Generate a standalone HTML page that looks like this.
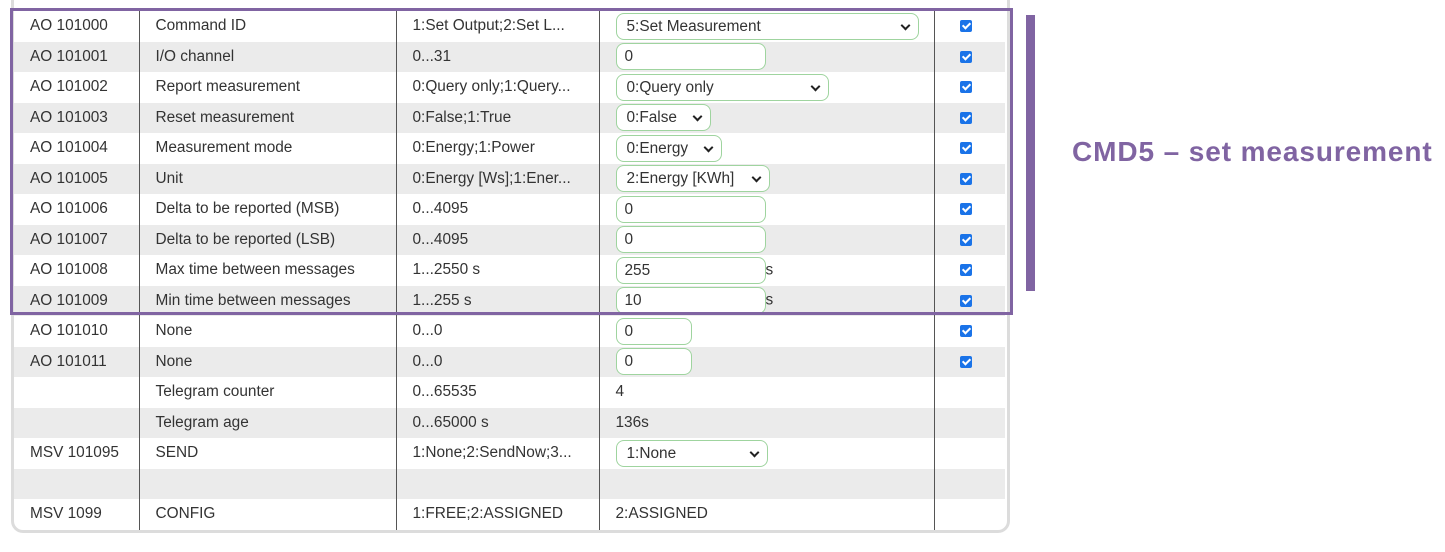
<!DOCTYPE html><html><head><style>
body{margin:0;width:1445px;height:552px;background:#fff;position:relative;overflow:hidden;font-family:"Liberation Sans",Arial,sans-serif;font-size:15.4px;color:#333}
.wrap{position:absolute;left:11px;top:0;width:993px;height:530px;border:3px solid #dcdcdc;border-top:none;border-radius:0 0 12px 12px;background:#fff}
table{border-collapse:collapse;position:absolute;left:14px;top:11px;width:991px}
td{height:30.5px;padding:0;vertical-align:middle;box-sizing:border-box}
tr:nth-child(even) td{background:#ebebeb}
td.c1{width:125px;padding-left:16px}
td.c2{width:257px;padding-left:16px;border-left:1px solid #555}
td.c3{width:203px;padding-left:16px;border-left:1px solid #555}
td.c4{width:335px;padding-left:16px;border-left:1px solid #555;white-space:nowrap}
td.c5{border-left:1px solid #555;text-align:center;padding-right:8px}
.f{display:inline-block;box-sizing:border-box;height:27px;border:1px solid #9fd49f;border-radius:8px;background:#fff;padding:4px 10px 0;vertical-align:middle;position:relative}
.i{padding-left:8px}
.s:after{content:"";position:absolute;right:9px;top:8px;width:5px;height:5px;border-right:2px solid #222;border-bottom:2px solid #222;transform:rotate(45deg)}
.cb{display:inline-block;width:12px;height:12px;background:#1a73e8;border-radius:2px;position:relative;vertical-align:middle}
.cb:after{content:"";position:absolute;left:4px;top:1px;width:3px;height:6px;border-right:2px solid #fff;border-bottom:2px solid #fff;transform:rotate(45deg)}
.box{position:absolute;left:10px;top:8px;width:997px;height:301px;border:3px solid #8064a2}
.bar{position:absolute;left:1026px;top:15px;width:9px;height:276px;background:#8064a2}
.t{position:absolute;left:1072px;top:136px;font-weight:bold;font-size:28px;color:#8064a2;font-family:"Liberation Sans",Calibri,sans-serif;letter-spacing:0.9px;white-space:nowrap}
</style></head><body>
<div class="wrap"></div>
<table>
<tr><td class="c1">AO 101000</td><td class="c2">Command ID</td><td class="c3">1:Set Output;2:Set L...</td><td class="c4"><span class="f s" style="width:303px">5:Set Measurement</span></td><td class="c5"><span class="cb"></span></td></tr>
<tr><td class="c1">AO 101001</td><td class="c2">I/O channel</td><td class="c3">0...31</td><td class="c4"><span class="f i" style="width:150px">0</span></td><td class="c5"><span class="cb"></span></td></tr>
<tr><td class="c1">AO 101002</td><td class="c2">Report measurement</td><td class="c3">0:Query only;1:Query...</td><td class="c4"><span class="f s" style="width:213px">0:Query only</span></td><td class="c5"><span class="cb"></span></td></tr>
<tr><td class="c1">AO 101003</td><td class="c2">Reset measurement</td><td class="c3">0:False;1:True</td><td class="c4"><span class="f s" style="width:95px">0:False</span></td><td class="c5"><span class="cb"></span></td></tr>
<tr><td class="c1">AO 101004</td><td class="c2">Measurement mode</td><td class="c3">0:Energy;1:Power</td><td class="c4"><span class="f s" style="width:106px">0:Energy</span></td><td class="c5"><span class="cb"></span></td></tr>
<tr><td class="c1">AO 101005</td><td class="c2">Unit</td><td class="c3">0:Energy [Ws];1:Ener...</td><td class="c4"><span class="f s" style="width:154px">2:Energy [KWh]</span></td><td class="c5"><span class="cb"></span></td></tr>
<tr><td class="c1">AO 101006</td><td class="c2">Delta to be reported (MSB)</td><td class="c3">0...4095</td><td class="c4"><span class="f i" style="width:150px">0</span></td><td class="c5"><span class="cb"></span></td></tr>
<tr><td class="c1">AO 101007</td><td class="c2">Delta to be reported (LSB)</td><td class="c3">0...4095</td><td class="c4"><span class="f i" style="width:150px">0</span></td><td class="c5"><span class="cb"></span></td></tr>
<tr><td class="c1">AO 101008</td><td class="c2">Max time between messages</td><td class="c3">1...2550 s</td><td class="c4"><span class="f i" style="width:150px">255</span>s</td><td class="c5"><span class="cb"></span></td></tr>
<tr><td class="c1">AO 101009</td><td class="c2">Min time between messages</td><td class="c3">1...255 s</td><td class="c4"><span class="f i" style="width:150px">10</span>s</td><td class="c5"><span class="cb"></span></td></tr>
<tr><td class="c1">AO 101010</td><td class="c2">None</td><td class="c3">0...0</td><td class="c4"><span class="f i" style="width:76px">0</span></td><td class="c5"><span class="cb"></span></td></tr>
<tr><td class="c1">AO 101011</td><td class="c2">None</td><td class="c3">0...0</td><td class="c4"><span class="f i" style="width:76px">0</span></td><td class="c5"><span class="cb"></span></td></tr>
<tr><td class="c1"></td><td class="c2">Telegram counter</td><td class="c3">0...65535</td><td class="c4">4</td><td class="c5"></td></tr>
<tr><td class="c1"></td><td class="c2">Telegram age</td><td class="c3">0...65000 s</td><td class="c4">136s</td><td class="c5"></td></tr>
<tr><td class="c1">MSV 101095</td><td class="c2">SEND</td><td class="c3">1:None;2:SendNow;3...</td><td class="c4"><span class="f s" style="width:152px">1:None</span></td><td class="c5"></td></tr>
<tr><td class="c1"></td><td class="c2"></td><td class="c3"></td><td class="c4"></td><td class="c5"></td></tr>
<tr><td class="c1">MSV 1099</td><td class="c2">CONFIG</td><td class="c3">1:FREE;2:ASSIGNED</td><td class="c4">2:ASSIGNED</td><td class="c5"></td></tr>
</table>
<div class="box"></div>
<div class="bar"></div>
<div class="t">CMD5 – set measurement</div>
</body></html>
